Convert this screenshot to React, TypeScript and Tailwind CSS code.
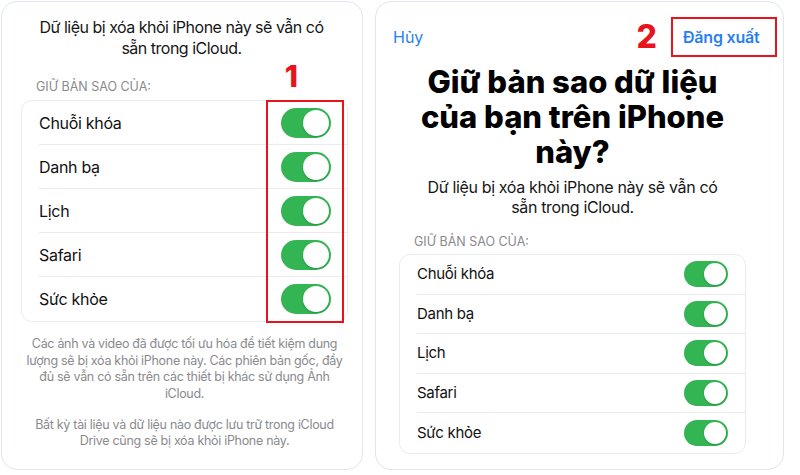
const items = ["Chuỗi khóa", "Danh bạ", "Lịch", "Safari", "Sức khỏe"];

function Toggle({ big }: { big?: boolean }) {
  return big ? (
    <div className="w-[50px] h-[30px] rounded-full bg-[#33b553] p-[2px] flex justify-end">
      <div className="w-[26px] h-[26px] rounded-full bg-white shadow-[0_1px_2px_rgba(0,0,0,0.2)]" />
    </div>
  ) : (
    <div className="w-[44px] h-[26px] rounded-full bg-[#33b553] p-[2px] flex justify-end">
      <div className="w-[22px] h-[22px] rounded-full bg-white shadow-[0_1px_2px_rgba(0,0,0,0.2)]" />
    </div>
  );
}

function SettingsGroup({ big }: { big?: boolean }) {
  return (
    <div className="rounded-[11px] border border-[#ececf0] bg-white">
      {items.map((name, i) => (
        <div key={name} className="pl-[17px]">
          <div
            className={
              (big
                ? "h-[44px] pr-[16px] text-[16px] tracking-[-0.3px]"
                : "h-[39.6px] pr-[17px] text-[15px] tracking-[-0.3px]") +
              " flex items-center justify-between text-[#111] " +
              (i < items.length - 1 ? "border-b border-[#ebebef]" : "")
            }
          >
            <span>{name}</span>
            <Toggle big={big} />
          </div>
        </div>
      ))}
    </div>
  );
}

function LeftPanel() {
  return (
    <div className="w-[362px] h-[469px] rounded-[16px] border border-[#dfe6ef] bg-white pt-[15px] pl-[19px] pr-[14px] flex flex-col">
      <p className="pr-[6px] text-center text-[16px] leading-[21px] text-[#161616] tracking-[-0.5px]">
        Dữ liệu bị xóa khỏi iPhone này sẽ vẫn có
        <br />
        sẵn trong iCloud.
      </p>
      <span className="mt-[20px] pl-[15px] text-[12.5px] leading-[16px] text-[#8a8a8e]">
        GIỮ BẢN SAO CỦA:
      </span>
      <div className="relative mt-[5px]">
        <SettingsGroup big />
        {/* red step number and highlight around the switches */}
        <span className="absolute top-[-39px] right-[50px] text-[30px] leading-[30px] font-extrabold text-[#e8141c]">
          1
        </span>
        <div className="absolute top-0 right-[4px] w-[78px] h-[223px] border-2 border-[#e8141c]" />
      </div>
      <div className="mt-[14px] text-center text-[12.5px] leading-[16.5px] text-[#8a8a8e] tracking-[-0.3px] whitespace-nowrap">
        <p>
          Các ảnh và video đã được tối ưu hóa để tiết kiệm dung
          <br />
          lượng sẽ bị xóa khỏi iPhone này. Các phiên bản gốc, đầy
          <br />
          đủ sẽ vẫn có sẵn trên các thiết bị khác sử dụng Ảnh
          <br />
          iCloud.
        </p>
        <p className="mt-[14.5px]">
          Bất kỳ tài liệu và dữ liệu nào được lưu trữ trong iCloud
          <br />
          Drive cũng sẽ bị xóa khỏi iPhone này.
        </p>
      </div>
    </div>
  );
}

function RightPanel() {
  return (
    <div className="w-[409px] h-[469px] rounded-[16px] border border-[#dfe6ef] bg-white flex flex-col">
      <div className="mt-[15px] pl-[17px] pr-[6px] flex items-center justify-between">
        <span className="text-[16px] text-[#2a7ff0]">Hủy</span>
        <div className="flex items-center">
          <span className="mr-[14px] text-[32px] leading-[32px] font-extrabold text-[#e8141c]">2</span>
          <div className="w-[106px] h-[40px] border-2 border-[#e8141c] pl-[10px] flex items-center">
            <span className="text-[16px] font-semibold text-[#2a7ff0] tracking-[-0.2px]">Đăng xuất</span>
          </div>
        </div>
      </div>
      <div className="pl-[23px] pr-[37px] flex flex-col">
        <h1 className="mt-[7px] text-center text-[31px] leading-[35px] font-extrabold text-black">
          Giữ bản sao dữ liệu
          <br />
          của bạn trên iPhone
          <br />
          này?
        </h1>
        <p className="mt-[8px] text-center text-[16px] leading-[20px] text-[#161616] tracking-[-0.35px]">
          Dữ liệu bị xóa khỏi iPhone này sẽ vẫn có
          <br />
          sẵn trong iCloud.
        </p>
        <span className="mt-[17px] pl-[15px] text-[12.5px] leading-[16px] text-[#8a8a8e]">
          GIỮ BẢN SAO CỦA:
        </span>
        <div className="mt-[4px]">
          <SettingsGroup />
        </div>
      </div>
    </div>
  );
}

export default function App() {
  return (
    <div
      className="w-[800px] h-[475px] bg-white pt-[1px] pl-[1px] flex gap-[12px]"
      style={{ fontFamily: "Inter, 'Noto Sans', sans-serif" }}
    >
      <LeftPanel />
      <RightPanel />
    </div>
  );
}
